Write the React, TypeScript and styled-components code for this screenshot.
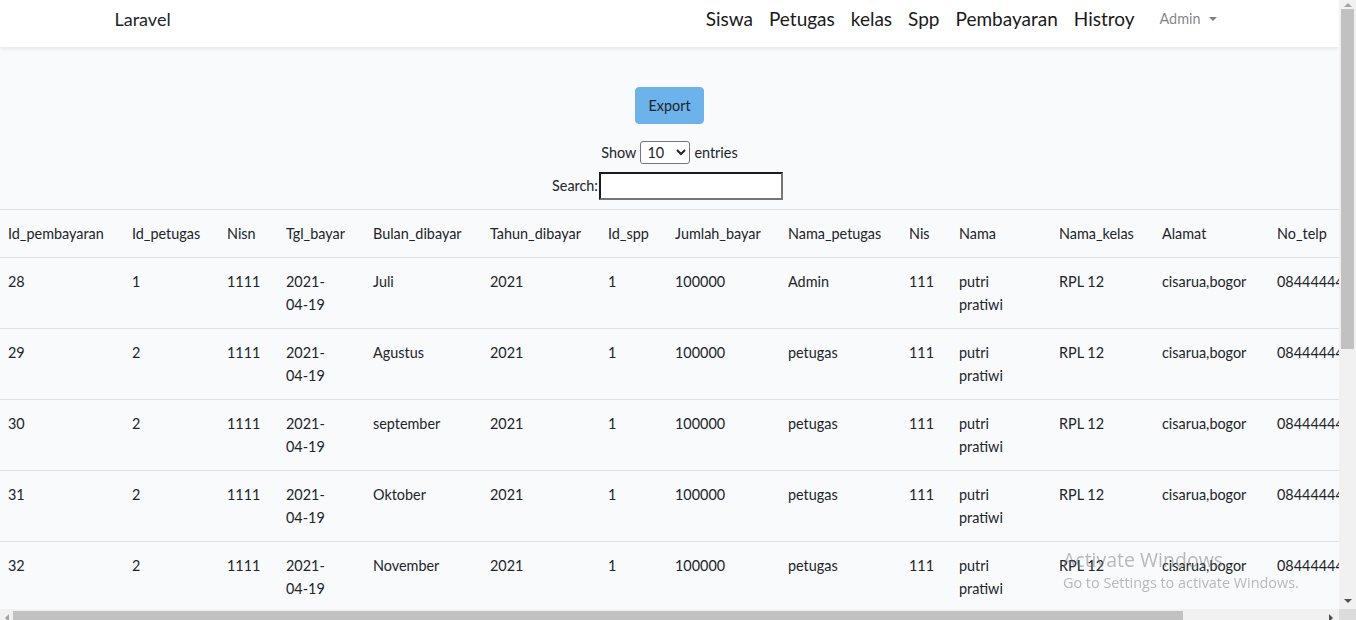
import React from "react";
import styled, { createGlobalStyle } from "styled-components";

const GlobalStyle = createGlobalStyle`
  html, body { margin: 0; padding: 0; overflow: hidden; }
  body {
    background: #f8fafc;
    font-family: Lato, "Noto Sans", sans-serif;
    font-size: 14.4px;
    line-height: 1.6;
    color: #212529;
  }
  * { box-sizing: border-box; }
`;

/* Browser frame: page viewport plus the window scrollbars */
const Frame = styled.div`
  display: grid;
  grid-template-columns: 1339px 17px;
  grid-template-rows: 609px 17px;
  width: 1356px;
  height: 626px;
`;

const Viewport = styled.div`
  overflow: hidden;
  background: #f8fafc;
`;

const VScroll = styled.div`
  display: flex;
  flex-direction: column;
  align-items: center;
  background: #f1f1f1;
`;

const HScroll = styled.div`
  display: flex;
  align-items: flex-start;
  background: #f1f1f1;
`;

const Corner = styled.div`
  background: #dcdcdc;
`;

const ArrowBox = styled.div<{ $h?: number; $w?: number }>`
  flex: none;
  display: flex;
  align-items: center;
  justify-content: center;
  height: ${(p) => (p.$h ? `${p.$h}px` : "17px")};
  width: ${(p) => (p.$w ? `${p.$w}px` : "17px")};
`;

const Tri = styled.span<{ $dir: "up" | "down" | "left" | "right"; $dim?: boolean }>`
  width: 0;
  height: 0;
  ${(p) => {
    const c = p.$dim ? "#a3a3a3" : "#505050";
    switch (p.$dir) {
      case "up":
        return `border-left: 4px solid transparent; border-right: 4px solid transparent; border-bottom: 4px solid ${c};`;
      case "down":
        return `border-left: 4px solid transparent; border-right: 4px solid transparent; border-top: 4px solid ${c};`;
      case "left":
        return `border-top: 4px solid transparent; border-bottom: 4px solid transparent; border-right: 4px solid ${c};`;
      default:
        return `border-top: 4px solid transparent; border-bottom: 4px solid transparent; border-left: 4px solid ${c};`;
    }
  }}
`;

const VThumb = styled.div`
  flex: none;
  width: 13px;
  height: 340px;
  background: #c1c1c1;
`;

const HThumb = styled.div`
  flex: none;
  margin-top: 2px;
  height: 13px;
  width: 1170px;
  background: #c1c1c1;
`;

const Spacer = styled.div`
  flex: 1;
`;

const Navbar = styled.nav`
  background: #ffffff;
  box-shadow: 0 2px 4px rgba(0, 0, 0, 0.075);
  height: 47px;
  position: relative;
`;

const NavContainer = styled.div`
  max-width: 1140px;
  margin: 0 auto;
  padding: 0 15px;
  height: 100%;
  display: flex;
  align-items: center;
  justify-content: space-between;
`;

const Brand = styled.a`
  font-size: 18px;
  color: #212529;
  text-decoration: none;
  margin-top: -8px;
`;

const NavList = styled.ul`
  list-style: none;
  margin: -9px 0 0 0;
  padding: 0;
  display: flex;
  align-items: center;
`;

const NavLink = styled.a`
  display: block;
  padding: 0 8px;
  font-size: 19px;
  color: #1a1a1a;
  text-decoration: none;
`;

const DropdownToggle = styled.a`
  display: flex;
  align-items: center;
  margin-left: 9px;
  padding: 0 8px;
  font-size: 14.4px;
  color: rgba(0, 0, 0, 0.5);
  text-decoration: none;
  &::after {
    content: "";
    display: inline-block;
    margin-left: 8px;
    border-top: 4.3px solid;
    border-left: 4.3px solid transparent;
    border-right: 4.3px solid transparent;
  }
`;

const Main = styled.main`
  padding-top: 40px;
`;

const Controls = styled.div`
  display: flex;
  flex-direction: column;
  align-items: center;
`;

const ExportButton = styled.button`
  font-family: inherit;
  font-size: 14.4px;
  line-height: 1.6;
  color: #212529;
  background: #6cb2eb;
  border: 1px solid #6cb2eb;
  border-radius: 4px;
  padding: 6px 12px;
  width: 69px;
  height: 37px;
  margin-bottom: 17px;
`;

const LengthRow = styled.label`
  display: flex;
  align-items: center;
  gap: 4px;
  height: 23px;
`;

const Select = styled.select`
  font-family: inherit;
  font-size: 14.4px;
  width: 50px;
  height: 23px;
  color: #212529;
  background: #fff;
  border: 1px solid #767676;
  border-radius: 3px;
  padding: 0 2px;
`;

const SearchRow = styled.label`
  display: flex;
  align-items: center;
  margin-top: 8px;
  margin-left: -4px;
`;

const SearchInput = styled.input`
  width: 184px;
  height: 28px;
  border: 2px solid;
  border-color: #1b1b1b #767676 #767676 #1b1b1b;
  background: #fff;
  font-family: inherit;
  margin: 0 0 0 1px;
`;

const Table = styled.table`
  margin: 9px 0 0 -4px;
  border-collapse: collapse;
  table-layout: fixed;
  width: 1498px;
`;

const Th = styled.th`
  font-weight: 400;
  text-align: left;
  vertical-align: bottom;
  padding: 12px;
  border-top: 1px solid #dee2e6;
  border-bottom: 1px solid #dee2e6;
  white-space: nowrap;
`;

const Td = styled.td`
  padding: 12px;
  vertical-align: top;
  border-top: 1px solid #dee2e6;
  overflow: hidden;
  white-space: nowrap;
`;

const Wrap = styled.span<{ $max: number }>`
  display: block;
  white-space: normal;
  max-width: ${(p) => p.$max}px;
`;

const Footer = styled.div`
  display: flex;
  justify-content: space-between;
  align-items: center;
  padding: 16px 8px 40px;
  width: 1339px;
`;

const Pager = styled.div`
  display: flex;
  gap: 8px;
`;

const PageBtn = styled.span<{ $active?: boolean }>`
  padding: 4px 10px;
  border: 1px solid ${(p) => (p.$active ? "#979797" : "transparent")};
  border-radius: 2px;
  color: ${(p) => (p.$active ? "#333" : "#666")};
`;

const Watermark = styled.div`
  position: fixed;
  left: 1063px;
  top: 548px;
  font-family: "Open Sans", "Noto Sans", sans-serif;
  color: rgba(120, 120, 120, 0.5);
  pointer-events: none;
  line-height: 1.2;
`;

const WmTitle = styled.div`
  font-size: 19.5px;
`;

const WmSub = styled.div`
  font-size: 14.4px;
  margin-top: 3px;
`;

const columns = [
  { name: "Id_pembayaran", w: 124 },
  { name: "Id_petugas", w: 95 },
  { name: "Nisn", w: 59 },
  { name: "Tgl_bayar", w: 87 },
  { name: "Bulan_dibayar", w: 117 },
  { name: "Tahun_dibayar", w: 118 },
  { name: "Id_spp", w: 67 },
  { name: "Jumlah_bayar", w: 113 },
  { name: "Nama_petugas", w: 121 },
  { name: "Nis", w: 50 },
  { name: "Nama", w: 100 },
  { name: "Nama_kelas", w: 103 },
  { name: "Alamat", w: 115 },
  { name: "No_telp", w: 229 },
];

const rows = [
  { id: 28, pet: 1, bulan: "Juli", nama: "Admin" },
  { id: 29, pet: 2, bulan: "Agustus", nama: "petugas" },
  { id: 30, pet: 2, bulan: "september", nama: "petugas" },
  { id: 31, pet: 2, bulan: "Oktober", nama: "petugas" },
  { id: 32, pet: 2, bulan: "November", nama: "petugas" },
  { id: 33, pet: 2, bulan: "Desember", nama: "petugas" },
  { id: 34, pet: 2, bulan: "Januari", nama: "petugas" },
  { id: 35, pet: 2, bulan: "Februari", nama: "petugas" },
  { id: 36, pet: 2, bulan: "Maret", nama: "petugas" },
  { id: 37, pet: 2, bulan: "April", nama: "petugas" },
];

function Page() {
  return (
    <>
      <Navbar>
        <NavContainer>
          <Brand href="#">Laravel</Brand>
          <NavList>
            {["Siswa", "Petugas", "kelas", "Spp", "Pembayaran", "Histroy"].map((l) => (
              <li key={l}>
                <NavLink href="#">{l}</NavLink>
              </li>
            ))}
            <li>
              <DropdownToggle href="#">Admin</DropdownToggle>
            </li>
          </NavList>
        </NavContainer>
      </Navbar>
      <Main>
        <Controls>
          <ExportButton>Export</ExportButton>
          <LengthRow>
            Show
            <Select defaultValue="10">
              <option value="10">10</option>
              <option value="25">25</option>
              <option value="50">50</option>
              <option value="100">100</option>
            </Select>
            entries
          </LengthRow>
          <SearchRow>
            Search:
            <SearchInput type="search" />
          </SearchRow>
        </Controls>
        <Table>
          <colgroup>
            {columns.map((c) => (
              <col key={c.name} style={{ width: c.w }} />
            ))}
          </colgroup>
          <thead>
            <tr>
              {columns.map((c) => (
                <Th key={c.name}>{c.name}</Th>
              ))}
            </tr>
          </thead>
          <tbody>
            {rows.map((r) => (
              <tr key={r.id}>
                <Td>{r.id}</Td>
                <Td>{r.pet}</Td>
                <Td>1111</Td>
                <Td>
                  <Wrap $max={48}>2021-04-19</Wrap>
                </Td>
                <Td>{r.bulan}</Td>
                <Td>2021</Td>
                <Td>1</Td>
                <Td>100000</Td>
                <Td>{r.nama}</Td>
                <Td>111</Td>
                <Td>
                  <Wrap $max={50}>putri pratiwi</Wrap>
                </Td>
                <Td>RPL 12</Td>
                <Td>cisarua,bogor</Td>
                <Td>084444444444</Td>
              </tr>
            ))}
          </tbody>
        </Table>
        <Footer>
          <span>Showing 1 to 10 of 14 entries</span>
          <Pager>
            <PageBtn>Previous</PageBtn>
            <PageBtn $active>1</PageBtn>
            <PageBtn>2</PageBtn>
            <PageBtn>Next</PageBtn>
          </Pager>
        </Footer>
      </Main>
    </>
  );
}

export default function App() {
  return (
    <>
      <GlobalStyle />
      <Frame>
        <Viewport>
          <Page />
        </Viewport>
        <VScroll>
          <ArrowBox $h={9}>
            <Tri $dir="up" $dim />
          </ArrowBox>
          <VThumb />
          <Spacer />
          <ArrowBox>
            <Tri $dir="down" />
          </ArrowBox>
        </VScroll>
        <HScroll>
          <ArrowBox $w={13}>
            <Tri $dir="left" $dim />
          </ArrowBox>
          <HThumb />
          <Spacer />
          <ArrowBox>
            <Tri $dir="right" />
          </ArrowBox>
        </HScroll>
        <Corner />
      </Frame>
      <Watermark>
        <WmTitle>Activate Windows</WmTitle>
        <WmSub>Go to Settings to activate Windows.</WmSub>
      </Watermark>
    </>
  );
}
